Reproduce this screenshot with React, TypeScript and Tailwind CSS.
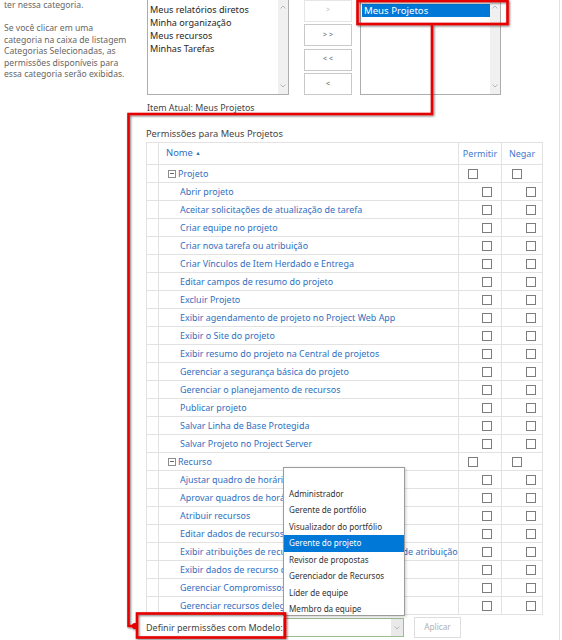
import React from "react";

const projeto = [
  "Abrir projeto",
  "Aceitar solicitações de atualização de tarefa",
  "Criar equipe no projeto",
  "Criar nova tarefa ou atribuição",
  "Criar Vínculos de Item Herdado e Entrega",
  "Editar campos de resumo do projeto",
  "Excluir Projeto",
  "Exibir agendamento de projeto no Project Web App",
  "Exibir o Site do projeto",
  "Exibir resumo do projeto na Central de projetos",
  "Gerenciar a segurança básica do projeto",
  "Gerenciar o planejamento de recursos",
  "Publicar projeto",
  "Salvar Linha de Base Protegida",
  "Salvar Projeto no Project Server",
];

const recurso = [
  "Ajustar quadro de horários",
  "Aprovar quadros de horários",
  "Atribuir recursos",
  "Editar dados de recursos corporativos",
  "Exibir atribuições de recursos em modos de exibição de atribuição",
  "Exibir dados de recurso corporativo",
  "Gerenciar Compromissos de Recursos",
  "Gerenciar recursos delegados",
];

const menu = [
  "",
  "Administrador",
  "Gerente de portfólio",
  "Visualizador do portfólio",
  "Gerente do projeto",
  "Revisor de propostas",
  "Gerenciador de Recursos",
  "Líder de equipe",
  "Membro da equipe",
];

function Box() {
  return <span className="block w-[10px] h-[10px] border border-[#7c7c7c] bg-white" />;
}

function Chevron({ up }: { up?: boolean }) {
  return (
    <svg width="6" height="4" viewBox="0 0 6 4">
      <path
        d={up ? "M0.5 3.5 L3 1 L5.5 3.5" : "M0.5 0.5 L3 3 L5.5 0.5"}
        fill="none"
        stroke="#a8a8a8"
        strokeWidth="0.8"
      />
    </svg>
  );
}

function Scrollbar() {
  return (
    <div className="w-[10px] h-full bg-[#f0f0f0] flex flex-col items-center justify-between pt-[5px] pb-[6px]">
      <Chevron up />
      <Chevron />
    </div>
  );
}

function MoveButton({ label, disabled }: { label: string; disabled?: boolean }) {
  return (
    <div
      className={
        disabled
          ? "h-[22px] border border-[#e6e6e6] bg-white flex items-center justify-center text-[7px] text-[#c4c4c4]"
          : "h-[22px] border border-[#c9c9c9] bg-white flex items-center justify-center text-[7px] text-[#666]"
      }
    >
      {label}
    </div>
  );
}

function GroupRow({ name }: { name: string }) {
  return (
    <tr className="h-[18px]">
      <td className="border border-[#e2e2e2] p-0" />
      <td className="border border-[#e2e2e2] p-0">
        <div className="flex items-center pl-[9px] gap-[2px] text-[#2f6fc0]">
          <span className="w-[8px] h-[8px] border border-[#8c8c8c] flex items-center justify-center">
            <span className="block w-[4px] h-px bg-[#666]" />
          </span>
          <span>{name}</span>
        </div>
      </td>
      <td className="border border-[#e2e2e2] p-0">
        <div className="flex pl-[9px]">
          <Box />
        </div>
      </td>
      <td className="border border-[#e2e2e2] p-0">
        <div className="flex pl-[10px]">
          <Box />
        </div>
      </td>
    </tr>
  );
}

function ItemRow({ name }: { name: string }) {
  return (
    <tr className="h-[18px]">
      <td className="border border-[#e2e2e2] p-0" />
      <td className="border border-[#e2e2e2] p-0">
        <div className="pl-[21px] whitespace-nowrap overflow-hidden text-[#2f6fc0]">{name}</div>
      </td>
      <td className="border border-[#e2e2e2] p-0">
        <div className="flex justify-end pr-[9px]">
          <Box />
        </div>
      </td>
      <td className="border border-[#e2e2e2] p-0">
        <div className="flex justify-end pr-[6px]">
          <Box />
        </div>
      </td>
    </tr>
  );
}

export default function App() {
  return (
    <div className="relative w-[562px] h-[640px] overflow-hidden bg-white font-['Segoe_UI','Noto_Sans',sans-serif]">
      <div className="w-[560px] h-[640px] border-r border-[#e2e2e2]">
        {/* top section */}
        <div className="flex items-start h-[95px]">
          <div className="w-[147px] pl-[4px] text-[8.6px] leading-[11.5px] text-[#666]">
            <p>ter nessa categoria.</p>
            <p className="mt-[11.5px]">
              Se você clicar em uma
              <br />
              categoria na caixa de listagem
              <br />
              Categorias Selecionadas, as
              <br />
              permissões disponíveis para
              <br />
              essa categoria serão exibidas.
            </p>
          </div>
          <div className="w-[142px] h-[96px] mt-[-1px] border border-[#adadad] flex">
            <div className="flex-1 pt-[3px] pl-[2px] text-[9.1px] leading-[13px] text-[#262626]">
              <div>Meus relatórios diretos</div>
              <div>Minha organização</div>
              <div>Meus recursos</div>
              <div>Minhas Tarefas</div>
            </div>
            <Scrollbar />
          </div>
          <div className="w-[48px] ml-[15px] mt-[-0.5px] flex flex-col gap-[2.5px]">
            <MoveButton label=">" disabled />
            <MoveButton label="> >" />
            <MoveButton label="< <" />
            <MoveButton label="<" />
          </div>
          <div className="w-[141px] h-[96px] ml-[8px] mt-[-1px] border border-[#adadad] flex">
            <div className="flex-1 pt-[4px] pl-[1px]">
              <div className="h-[13px] bg-[#0078d7] text-white text-[9.6px] leading-[13px] pl-[2px]">
                Meus Projetos
              </div>
            </div>
            <Scrollbar />
          </div>
        </div>

        {/* main column */}
        <div className="ml-[146px] w-[396px]">
          <div className="mt-[7px] h-[12px] text-[8.9px] leading-[12px] text-[#444] ml-[1px]">
            Item Atual: Meus Projetos
          </div>
          <div className="mt-[14px] h-[12px] text-[9.3px] leading-[12px] text-[#444]">
            Permissões para Meus Projetos
          </div>
          <table className="mt-[2px] table-fixed border-collapse w-[396px] border border-[#cdcdcd] text-[8.95px] leading-[16px]">
            <colgroup>
              <col className="w-[12px]" />
              <col className="w-[300px]" />
              <col className="w-[43px]" />
              <col className="w-[41px]" />
            </colgroup>
            <thead>
              <tr className="h-[22px]">
                <th className="border border-[#e2e2e2] p-0 font-normal" />
                <th className="border border-[#e2e2e2] p-0 font-normal text-left">
                  <span className="pl-[7px] text-[#2f6fc0] text-[9.4px]">
                    Nome <span className="text-[5.5px] align-middle text-[#3a6fb5]">▲</span>
                  </span>
                </th>
                <th className="border border-[#e2e2e2] p-0 font-normal text-center text-[#3e7bcc] text-[9px]">
                  Permitir
                </th>
                <th className="border border-[#e2e2e2] p-0 font-normal text-center text-[#3e7bcc] text-[9px]">
                  Negar
                </th>
              </tr>
            </thead>
            <tbody>
              <GroupRow name="Projeto" />
              {projeto.map((p) => (
                <ItemRow key={p} name={p} />
              ))}
              <GroupRow name="Recurso" />
              {recurso.map((p) => (
                <ItemRow key={p} name={p} />
              ))}
            </tbody>
          </table>

          {/* bottom bar */}
          <div className="mt-[2px] h-[21px] flex items-center">
            <div className="w-[137px] text-[9px] text-[#444] whitespace-nowrap">Definir permissões com Modelo:</div>
            <div className="relative w-[121px] h-[19px] border border-[#9dbd94] bg-white flex justify-end">
              <div className="absolute left-[-1px] bottom-[20px] w-[122px] h-[149px] border border-[#9c9c9c] bg-white shadow-[1px_1px_3px_rgba(0,0,0,0.2)] pt-[1px] text-[8.1px] text-[#333]">
                {menu.map((m, i) => (
                  <div
                    key={i}
                    className={
                      m === "Gerente do projeto"
                        ? "h-[16.5px] leading-[16.5px] pl-[5px] bg-[#0078d7] text-white"
                        : "h-[16.5px] leading-[16.5px] pl-[5px]"
                    }
                  >
                    {m}
                  </div>
                ))}
              </div>
              <div className="w-[12px] h-full bg-[#e9e9e9] flex items-center justify-center">
                <Chevron />
              </div>
            </div>
            <div className="ml-[10px] w-[47px] h-[21px] border border-[#dedede] bg-white flex items-center justify-center text-[8.2px] text-[#b0b0b0]">
              Aplicar
            </div>
          </div>
        </div>
      </div>

      {/* red annotation overlay */}
      <svg className="absolute left-0 top-0 pointer-events-none" width="562" height="640" viewBox="0 0 562 640">
        <defs>
          <filter id="sh" x="-10%" y="-10%" width="120%" height="120%">
            <feDropShadow dx="1" dy="1" stdDeviation="0.8" floodColor="#000" floodOpacity="0.55" />
          </filter>
        </defs>
        <g filter="url(#sh)" fill="none" stroke="#e60000" strokeWidth="2.6">
          <rect x="357.5" y="1" width="150" height="23" />
          <path d="M432 24 V114 H128.5 V626 H137" />
          <rect x="137" y="613.5" width="148" height="24" />
          <circle cx="135" cy="626" r="1.8" fill="#e60000" />
        </g>
      </svg>
    </div>
  );
}
